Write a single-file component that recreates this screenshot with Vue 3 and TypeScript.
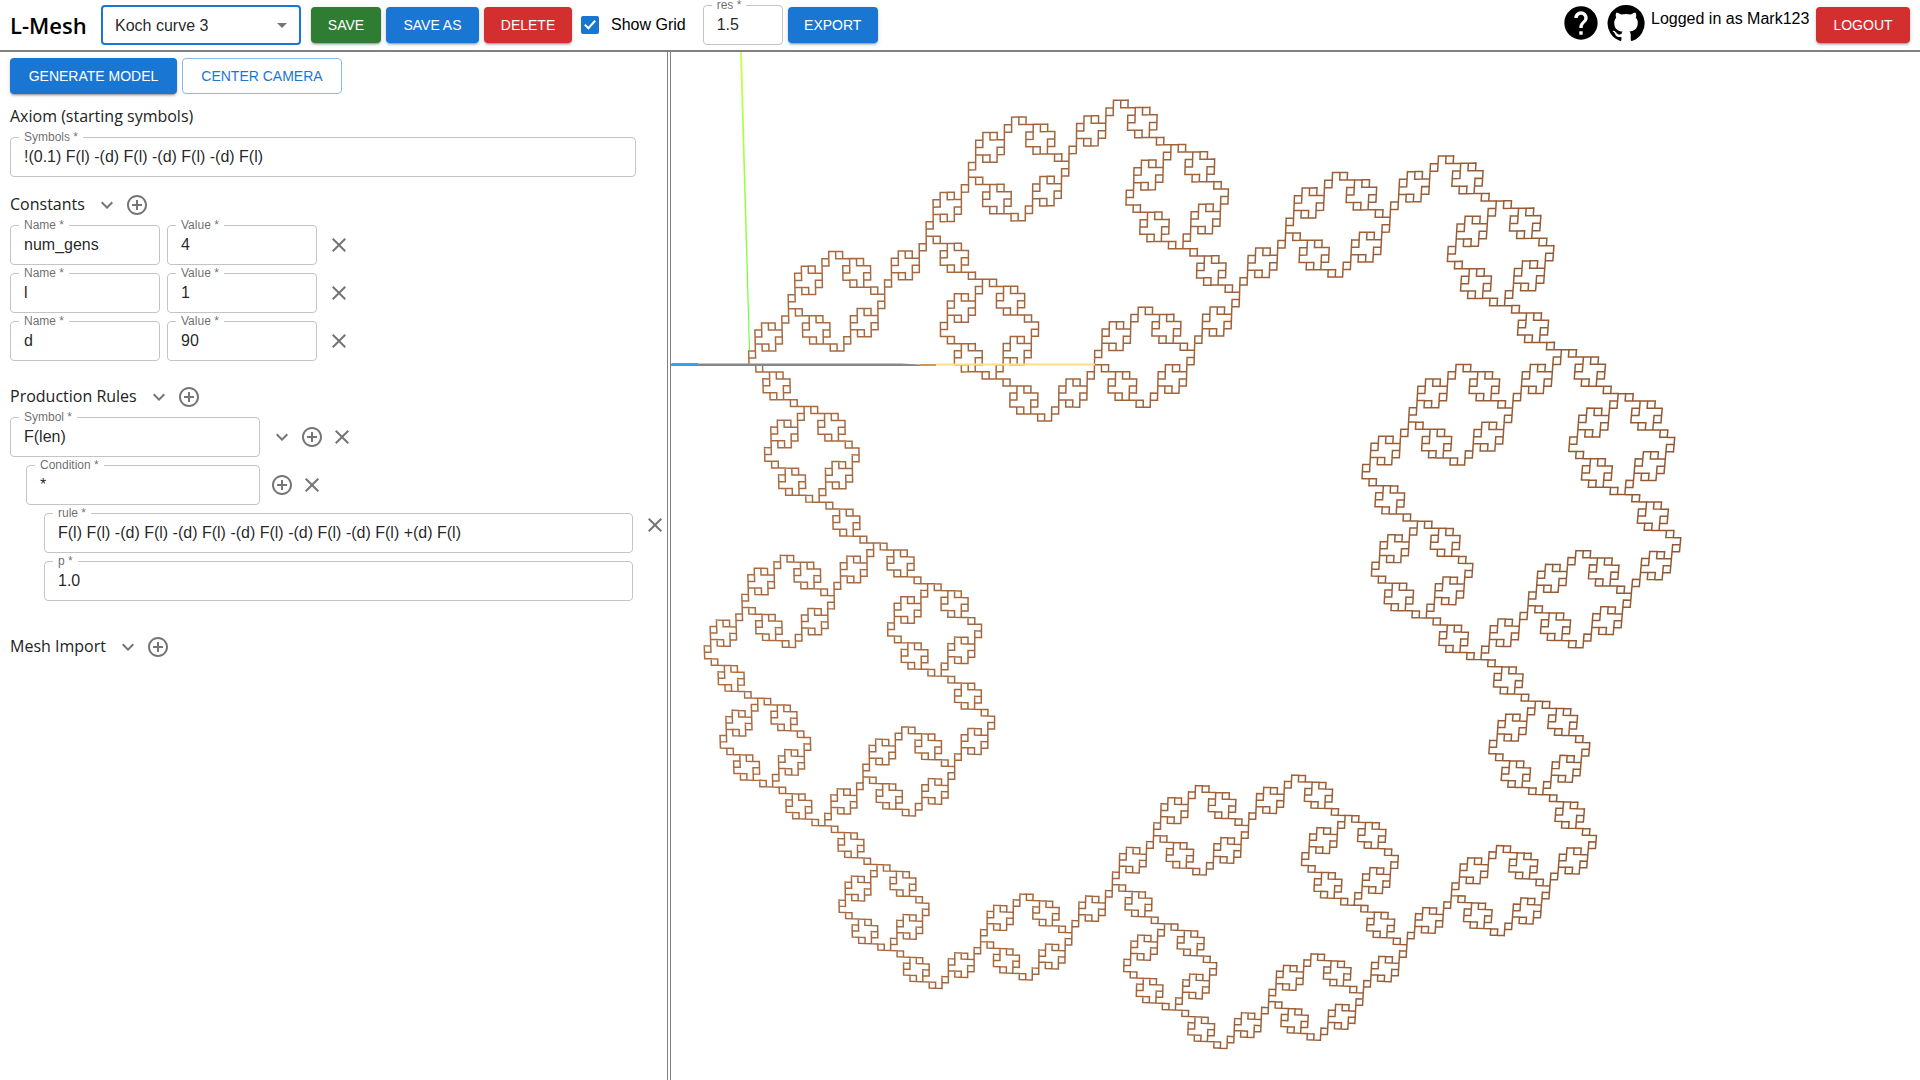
<script setup lang="ts">
import { computed, reactive, ref } from 'vue'

interface Constant {
  id: number
  name: string
  value: string
}

type Point = [number, number]

const models = ['Koch curve 3']
const selectedModel = ref(models[0])
const showGrid = ref(true)
const resolution = ref('1.5')
const username = 'Mark123'

const axiom = ref('!(0.1) F(l) -(d) F(l) -(d) F(l) -(d) F(l)')
const constants = reactive<Constant[]>([
  { id: 1, name: 'num_gens', value: '4' },
  { id: 2, name: 'l', value: '1' },
  { id: 3, name: 'd', value: '90' },
])
const production = reactive({
  symbol: 'F(len)',
  condition: '*',
  rule: 'F(l) F(l) -(d) F(l) -(d) F(l) -(d) F(l) -(d) F(l) -(d) F(l) +(d) F(l)',
  p: '1.0',
})

const GENERATIONS = 4
// Displacement of one expanded side: 96 steps across, 28 steps up.
const SIDE: Point = [96, 28]
// Where the four corners of the model fall in the viewport.
const CORNERS: Point[] = [
  [78, 313],
  [767.5, 104],
  [925.5, 783.5],
  [271, 936.5],
]

function expand(source: string, generations: number): string {
  let text = source
  for (let i = 0; i < generations; i++) {
    text = text.replace(/F/g, 'FF-F-F-F-F-F+F')
  }
  return text
}

// Maps model space to the viewport through a perspective camera.
function createProjection(corners: Point[]): (p: Point) => Point {
  const [[x0, y0], [x1, y1], [x2, y2], [x3, y3]] = corners
  const dx1 = x1 - x2
  const dx2 = x3 - x2
  const dy1 = y1 - y2
  const dy2 = y3 - y2
  const sx = x0 - x1 + x2 - x3
  const sy = y0 - y1 + y2 - y3
  const det = dx1 * dy2 - dx2 * dy1
  const g = (sx * dy2 - dx2 * sy) / det
  const h = (dx1 * sy - sx * dy1) / det
  const a = x1 - x0 + g * x1
  const b = x3 - x0 + h * x3
  const d = y1 - y0 + g * y1
  const e = y3 - y0 + h * y3
  const length = SIDE[0] * SIDE[0] + SIDE[1] * SIDE[1]
  return ([x, y]) => {
    const s = (x * SIDE[0] + y * SIDE[1]) / length
    const t = (x * SIDE[1] - y * SIDE[0]) / length
    const w = g * s + h * t + 1
    return [(a * s + b * t + x0) / w, (d * s + e * t + y0) / w]
  }
}

const curvePath = computed(() => {
  const project = createProjection(CORNERS)
  const drawn = new Set<string>()
  const parts: string[] = []
  let x = 0
  let y = 0
  let hx = 0
  let hy = 1
  for (const symbol of expand('F-F-F-F', GENERATIONS)) {
    if (symbol === 'F') {
      const nx = x + hx
      const ny = y + hy
      const key = `${x + nx},${y + ny}`
      if (!drawn.has(key)) {
        drawn.add(key)
        const from = project([x, y])
        const to = project([nx, ny])
        parts.push(`M${from[0].toFixed(2)} ${from[1].toFixed(2)}L${to[0].toFixed(2)} ${to[1].toFixed(2)}`)
      }
      x = nx
      y = ny
    } else if (symbol === '-') {
      ;[hx, hy] = [hy, -hx]
    } else {
      ;[hx, hy] = [-hy, hx]
    }
  }
  return parts.join('')
})

const icons = {
  expand: 'M16.59 8.59 12 13.17 7.41 8.59 6 10l6 6 6-6z',
  add: 'M13 7h-2v4H7v2h4v4h2v-4h4v-2h-4V7zm-1-5C6.48 2 2 6.48 2 12s4.48 10 10 10 10-4.48 10-10S17.52 2 12 2zm0 18c-4.41 0-8-3.59-8-8s3.59-8 8-8 8 3.59 8 8-3.59 8-8 8z',
  close: 'M19 6.41 17.59 5 12 10.59 6.41 5 5 6.41 10.59 12 5 17.59 6.41 19 12 13.41 17.59 19 19 17.59 13.41 12z',
  help: 'M12 2C6.48 2 2 6.48 2 12s4.48 10 10 10 10-4.48 10-10S17.52 2 12 2zm1 17h-2v-2h2v2zm2.07-7.75-.9.92C13.45 12.9 13 13.5 13 15h-2v-.5c0-1.1.45-2.1 1.17-2.83l1.24-1.26c.37-.36.59-.86.59-1.41 0-1.1-.9-2-2-2s-2 .9-2 2H8c0-2.21 1.79-4 4-4s4 1.79 4 4c0 .88-.36 1.68-.93 2.25z',
  github: 'M12 1.27a11 11 0 00-3.48 21.46c.55.09.73-.28.73-.55v-1.84c-3.03.64-3.67-1.46-3.67-1.46-.55-1.29-1.28-1.65-1.28-1.65-.92-.65.1-.65.1-.65 1.1 0 1.73 1.1 1.73 1.1.92 1.65 2.57 1.2 3.21.92a2 2 0 01.64-1.47c-2.47-.27-5.04-1.19-5.04-5.5 0-1.1.46-2.1 1.2-2.84a3.76 3.76 0 010-2.93s.91-.28 3.11 1.1c1.8-.49 3.7-.49 5.5 0 2.1-1.38 3.02-1.1 3.02-1.1a3.76 3.76 0 01.1 2.93c.83.74 1.2 1.74 1.2 2.94 0 4.21-2.57 5.13-5.04 5.4.45.37.82.92.82 2.02v3.03c0 .27.1.64.73.55A11 11 0 0012 1.27',
}
</script>

<template>
  <div class="app">
    <header class="topbar">
      <h1 class="brand">L-Mesh</h1>
      <div class="model-select">
        <select v-model="selectedModel" aria-label="Model">
          <option v-for="model in models" :key="model">{{ model }}</option>
        </select>
        <svg class="caret" viewBox="0 0 24 24" aria-hidden="true"><path d="M7 10l5 5 5-5z" /></svg>
      </div>
      <div class="actions">
        <button type="button" class="btn success">SAVE</button>
        <button type="button" class="btn primary">SAVE AS</button>
        <button type="button" class="btn danger">DELETE</button>
      </div>
      <label class="check">
        <input v-model="showGrid" type="checkbox" />
        <span>Show Grid</span>
      </label>
      <div class="field res">
        <label for="res">res *</label>
        <input id="res" v-model="resolution" type="text" required />
      </div>
      <button type="button" class="btn primary export">EXPORT</button>
      <nav class="account">
        <a href="#help" aria-label="Help"><svg viewBox="0 0 24 24"><path :d="icons.help" /></svg></a>
        <a href="#github" aria-label="GitHub"><svg viewBox="0 0 24 24"><path :d="icons.github" /></svg></a>
        <span class="user">Logged in as {{ username }}</span>
        <button type="button" class="btn danger logout">LOGOUT</button>
      </nav>
    </header>

    <main class="workspace">
      <form class="panel" @submit.prevent>
        <div class="actions">
          <button type="button" class="btn primary generate">GENERATE MODEL</button>
          <button type="button" class="btn outlined">CENTER CAMERA</button>
        </div>

        <section class="axiom">
          <h2>Axiom (starting symbols)</h2>
          <div class="field">
            <label for="axiom">Symbols *</label>
            <input id="axiom" v-model="axiom" type="text" required />
          </div>
        </section>

        <section class="group">
          <div class="group-head">
            <h2>Constants</h2>
            <button type="button" class="icon" aria-label="Collapse constants"><svg viewBox="0 0 24 24"><path :d="icons.expand" /></svg></button>
            <button type="button" class="icon" aria-label="Add constant"><svg viewBox="0 0 24 24"><path :d="icons.add" /></svg></button>
          </div>
          <div v-for="constant in constants" :key="constant.id" class="row">
            <div class="field small">
              <label :for="`name-${constant.id}`">Name *</label>
              <input :id="`name-${constant.id}`" v-model="constant.name" type="text" required />
            </div>
            <div class="field small">
              <label :for="`value-${constant.id}`">Value *</label>
              <input :id="`value-${constant.id}`" v-model="constant.value" type="text" required />
            </div>
            <button type="button" class="icon" aria-label="Remove constant"><svg viewBox="0 0 24 24"><path :d="icons.close" /></svg></button>
          </div>
        </section>

        <section class="group rules">
          <div class="group-head">
            <h2>Production Rules</h2>
            <button type="button" class="icon" aria-label="Collapse rules"><svg viewBox="0 0 24 24"><path :d="icons.expand" /></svg></button>
            <button type="button" class="icon" aria-label="Add rule"><svg viewBox="0 0 24 24"><path :d="icons.add" /></svg></button>
          </div>
          <div class="row">
            <div class="field symbol">
              <label for="symbol">Symbol *</label>
              <input id="symbol" v-model="production.symbol" type="text" required />
            </div>
            <div class="icons">
              <button type="button" class="icon" aria-label="Collapse rule"><svg viewBox="0 0 24 24"><path :d="icons.expand" /></svg></button>
              <button type="button" class="icon" aria-label="Add condition"><svg viewBox="0 0 24 24"><path :d="icons.add" /></svg></button>
              <button type="button" class="icon" aria-label="Remove rule"><svg viewBox="0 0 24 24"><path :d="icons.close" /></svg></button>
            </div>
          </div>
          <div class="row condition">
            <div class="field">
              <label for="condition">Condition *</label>
              <input id="condition" v-model="production.condition" type="text" required />
            </div>
            <div class="icons">
              <button type="button" class="icon" aria-label="Add result"><svg viewBox="0 0 24 24"><path :d="icons.add" /></svg></button>
              <button type="button" class="icon" aria-label="Remove condition"><svg viewBox="0 0 24 24"><path :d="icons.close" /></svg></button>
            </div>
          </div>
          <div class="result">
            <div class="result-fields">
              <div class="field">
                <label for="rule">rule *</label>
                <input id="rule" v-model="production.rule" type="text" required />
              </div>
              <div class="field">
                <label for="probability">p *</label>
                <input id="probability" v-model="production.p" type="text" required />
              </div>
            </div>
            <button type="button" class="icon" aria-label="Remove result"><svg viewBox="0 0 24 24"><path :d="icons.close" /></svg></button>
          </div>
        </section>

        <section class="group meshes">
          <div class="group-head">
            <h2>Mesh Import</h2>
            <button type="button" class="icon" aria-label="Collapse meshes"><svg viewBox="0 0 24 24"><path :d="icons.expand" /></svg></button>
            <button type="button" class="icon" aria-label="Add mesh"><svg viewBox="0 0 24 24"><path :d="icons.add" /></svg></button>
          </div>
        </section>
      </form>

      <div class="divider" role="separator"></div>

      <section class="viewport">
        <svg viewBox="0 0 1249 1028" preserveAspectRatio="xMinYMin meet" role="img" aria-label="Model view">
          <defs>
            <linearGradient id="bark" x1="0" y1="0" x2="1" y2="0">
              <stop offset="0" stop-color="#ab6c40" />
              <stop offset="1" stop-color="#935831" />
            </linearGradient>
            <linearGradient id="axis-y" gradientUnits="userSpaceOnUse" x1="0" y1="0" x2="0" y2="300">
              <stop offset="0" stop-color="#ccff50" />
              <stop offset="1" stop-color="#5cff2c" />
            </linearGradient>
          </defs>
          <path class="curve" :d="curvePath" />
          <g v-if="showGrid">
            <path d="M69 0h2l8 299h-1z" fill="url(#axis-y)" />
            <rect x="265" y="311.500" width="159" height="2" fill="#ffe080" />
            <rect x="249" y="312" width="16" height="2" fill="#cc9a5b" />
            <path d="M0 311.500H230L249 312.500V314H0z" fill="#85878a" />
            <rect x="1" y="311" width="26" height="2" fill="#35a3ee" />
          </g>
        </svg>
      </section>
    </main>
  </div>
</template>

<style>
body {
  margin: 0;
  background: #fff;
}
</style>

<style scoped>
.app {
  display: flex;
  flex-direction: column;
  min-height: 100vh;
  font-family: "Liberation Sans", Arial, sans-serif;
  font-size: 16px;
  color: #000;
}

*,
*::after {
  box-sizing: border-box;
}

.topbar {
  display: flex;
  align-items: center;
  height: 52px;
  padding: 0 10px;
  border-bottom: 2px solid #808080;
}

.brand {
  width: 91px;
  margin: 0;
  font: 600 22px/30px "Open Sans", "Noto Sans", sans-serif;
}

.model-select {
  position: relative;
  width: 200px;
  margin-right: 10px;
}

.model-select select {
  width: 100%;
  height: 40px;
  padding: 0 32px 0 12px;
  border: 2px solid #1976d2;
  border-radius: 4px;
  background: #fff;
  color: rgba(0, 0, 0, 0.87);
  font: inherit;
  appearance: none;
}

.caret {
  position: absolute;
  top: 8px;
  right: 7px;
  width: 24px;
  height: 24px;
  fill: #757575;
  pointer-events: none;
}

.actions {
  display: flex;
  gap: 5px;
}

.btn {
  height: 36px;
  padding: 0 15px;
  border: 0;
  border-radius: 4px;
  color: #fff;
  font: 14px/24px "Liberation Sans", Arial, sans-serif;
  white-space: nowrap;
  box-shadow: 0 3px 1px -2px rgba(0, 0, 0, 0.2), 0 2px 2px rgba(0, 0, 0, 0.14), 0 1px 5px rgba(0, 0, 0, 0.12);
}

.topbar .btn {
  min-width: 70px;
}

.primary {
  background: #1976d2;
}

.success {
  background: #2e7d32;
}

.danger {
  background: #d32f2f;
}

.topbar .actions .primary {
  width: 93px;
}

.topbar .actions .danger {
  width: 88px;
}

.export {
  width: 90px;
}

.logout {
  width: 94px;
}

.generate {
  width: 167px;
}

.outlined {
  width: 160px;
  border: 1px solid #8cbae8;
  background: #fff;
  color: #1976d2;
  box-shadow: none;
}

.check {
  display: flex;
  align-items: center;
  gap: 12px;
  margin: 0 17px 0 9px;
}

.check input {
  position: relative;
  width: 18px;
  height: 18px;
  margin: 0;
  border: 2px solid #757575;
  border-radius: 2px;
  appearance: none;
}

.check input:checked {
  border-color: #1976d2;
  background: #1976d2;
}

.check input:checked::after {
  content: "";
  position: absolute;
  top: 0;
  left: 4px;
  width: 6px;
  height: 11px;
  border: solid #fff;
  border-width: 0 2px 2px 0;
  transform: rotate(42deg);
}

.field {
  position: relative;
  flex: 1;
}

.field label {
  position: absolute;
  top: -7px;
  left: 9px;
  padding: 0 5px;
  background: #fff;
  color: rgba(0, 0, 0, 0.6);
  font-size: 12px;
  line-height: 14px;
}

.field input {
  display: block;
  width: 100%;
  height: 40px;
  padding: 0 13px;
  border: 1px solid #c4c4c4;
  border-radius: 4px;
  background: #fff;
  color: rgba(0, 0, 0, 0.87);
  font: inherit;
}

.field.res {
  flex: none;
  width: 80px;
  margin-right: 5px;
}

.account {
  display: flex;
  align-items: center;
  gap: 5px;
  margin-left: auto;
}

.account a,
.account svg {
  display: block;
  width: 40px;
  height: 40px;
}

.account a {
  margin-bottom: 4px;
}

.user {
  min-width: 160px;
  padding-bottom: 12px;
}

.workspace {
  display: flex;
  flex: 1;
}

.panel {
  width: 667px;
  padding: 6px 0 0 10px;
}

.panel h2 {
  margin: 0;
  color: #222;
  font: 400 16px/24px "Open Sans", "Noto Sans", sans-serif;
}

.axiom {
  padding: 10px 31px 13px 0;
}

.axiom .field {
  margin-top: 9px;
}

.group {
  display: flex;
  flex-direction: column;
  gap: 8px;
}

.group-head {
  display: flex;
  align-items: center;
  height: 30px;
  margin-bottom: -3px;
}

.group-head h2 {
  margin-right: 7px;
  padding-bottom: 2px;
}

.row {
  display: flex;
  align-items: center;
  gap: 7px;
}

.field.small,
.field.symbol {
  flex: none;
  width: 150px;
}

.field.symbol {
  width: 250px;
}

.icon {
  display: flex;
  align-items: center;
  justify-content: center;
  width: 30px;
  height: 24px;
  padding: 0;
  border: 0;
  background: none;
}

.icon svg {
  width: 24px;
  height: 24px;
  fill: #757575;
}

.icons {
  display: flex;
}

.rules {
  margin-top: 21px;
}

.condition {
  padding-left: 16px;
}

.condition .field {
  flex: none;
  width: 234px;
}

.result {
  display: flex;
  gap: 7px;
  margin-right: -3px;
  padding-left: 34px;
}

.result-fields {
  display: flex;
  flex: 1;
  flex-direction: column;
  gap: 8px;
}

.meshes {
  margin-top: 31px;
}

.divider {
  width: 4px;
  border: solid #808080;
  border-width: 0 1px;
}

.viewport {
  flex: 1;
  min-width: 0;
}

.viewport svg {
  display: block;
  width: 100%;
}

.curve {
  fill: none;
  stroke: url(#bark);
  stroke-width: 1.5;
  stroke-linecap: square;
}
</style>
